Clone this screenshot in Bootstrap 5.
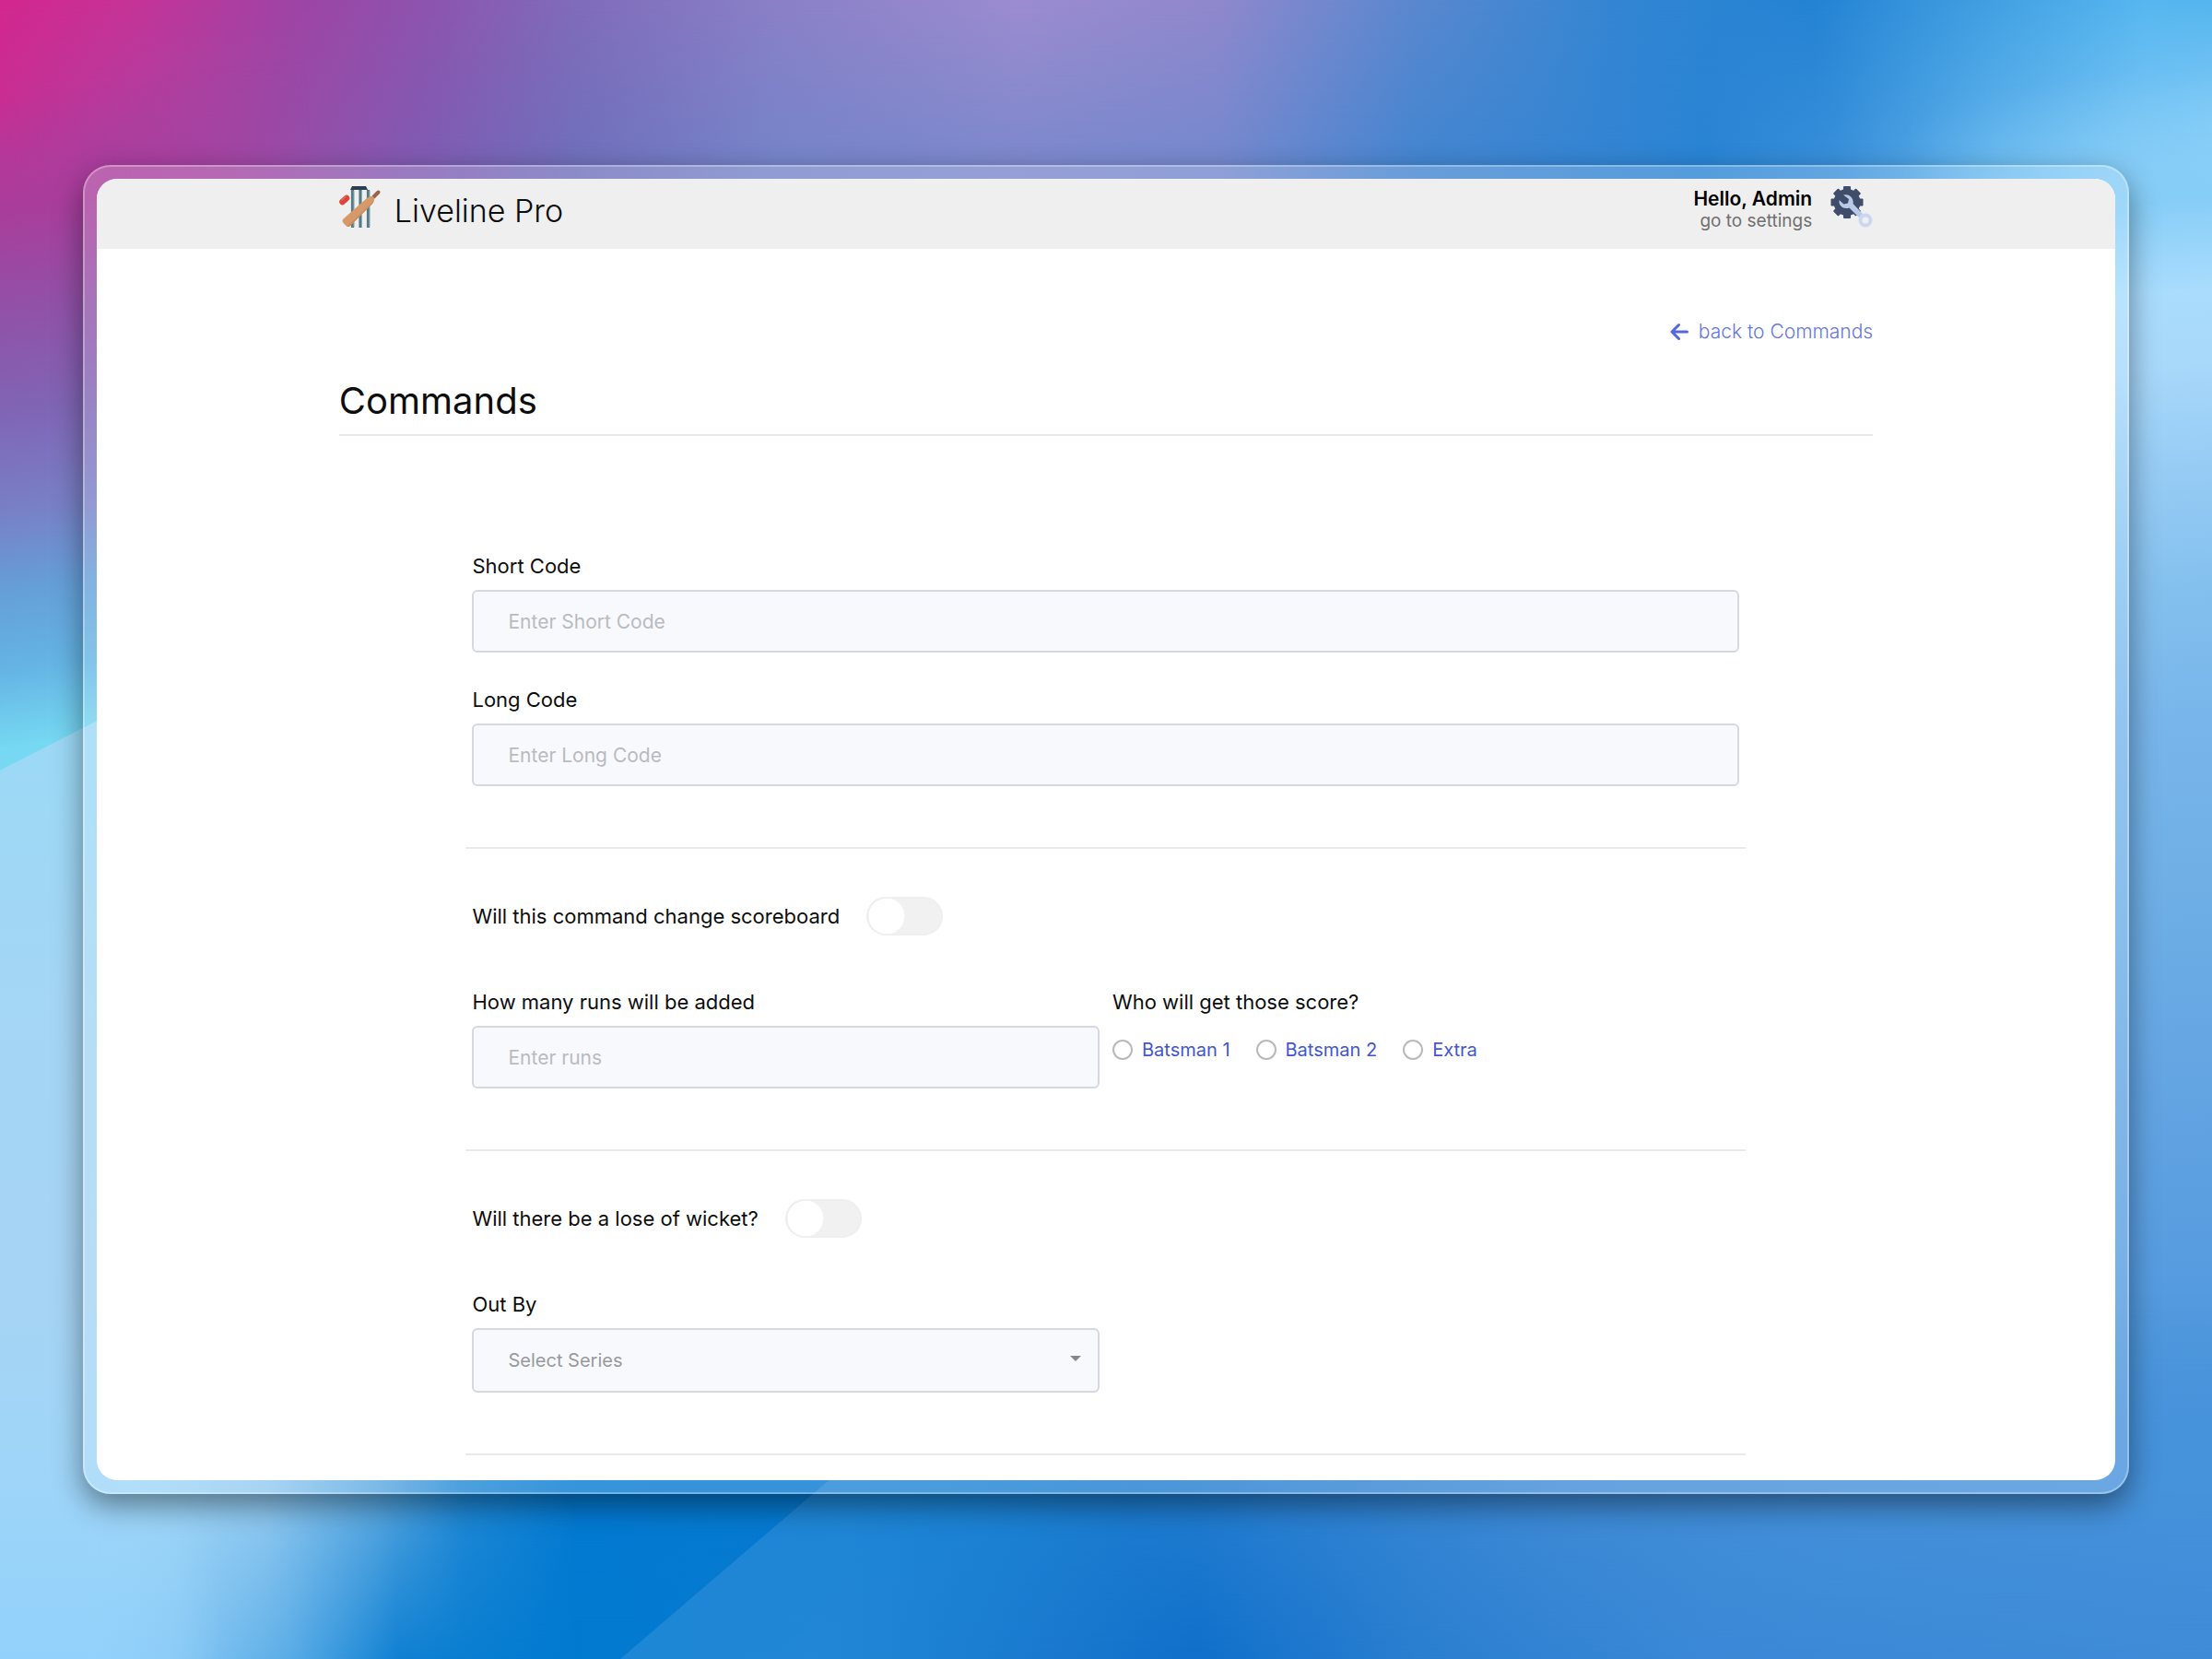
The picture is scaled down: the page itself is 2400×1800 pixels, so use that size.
<!DOCTYPE html>
<html lang="en">
<head>
<meta charset="utf-8">
<meta name="viewport" content="width=device-width, initial-scale=1">
<title>Liveline Pro – Commands</title>
<link href="https://cdn.jsdelivr.net/npm/bootstrap@5.3.0/dist/css/bootstrap.min.css" rel="stylesheet">
<style>
body { font-family: Inter, "Open Sans", sans-serif; color: #0d0d0d; font-size: 22px; line-height: 32px; background: #4a94da; }

/* Wallpaper */
.wallpaper { z-index: 0; }
.wallpaper > div { position: absolute; inset: 0; }
.wp-top { background: linear-gradient(to right, #d3278f 0, #c63397 6%, #a043a5 13%, #8e53ae 19%, #806cba 26%, #8a80c8 35%, #9c8cd0 46%, #9088cd 55%, #5a88cf 64%, #3386d3 73%, #2483d4 82%, #42a0e2 90%, #56b7f0 97%, #55b5ee); }
.wp-upper { background: linear-gradient(to right, #c23295 0, #aa42a2 6%, #964ea8 13%, #7f5bb2 19%, #6f6fbb 26%, #7584c8 35%, #7c88cc 46%, #7488cd 55%, #4385d0 64%, #2a84d4 77%, #3a90da 83%, #60b3ec 90%, #7fc7f5 96%, #8fd2fa); -webkit-mask-image: linear-gradient(transparent, #000 10%); mask-image: linear-gradient(transparent, #000 10%); }
.wp-left { background: linear-gradient(172deg, transparent 5%, #a83e9c 11%, #9052a8 16%, #8065b5 21%, #7880c6 26%, #659fd8 30%, #64b4e4 34%, #76d8f2 38%); -webkit-mask-image: linear-gradient(to right, #000 5%, transparent 14%); mask-image: linear-gradient(to right, #000 5%, transparent 14%); }
.wp-pale { background: linear-gradient(#9cd9f6 46%, #a4d6f5 60%, #a6d4f4 78%, #9fd5f8 88%, #92d1fb); clip-path: polygon(0 46.4%, 5% 43%, 10% 40%, 10% 100%, 0 100%); -webkit-mask-image: linear-gradient(to right, #000 4%, transparent 10%); mask-image: linear-gradient(to right, #000 4%, transparent 10%); }
.wp-right { background: linear-gradient(175deg, transparent 14%, #86cdf7 21%, #a9dcfd 26%, #a8d8fa 30%, #98cdf5 35%, #84c0ee 42%, #78b5ea 49%, #6fafe6 58%, #62a3e2 70%, #559bdf 80%, #4a94da 88%, #3f8ad5 95%, #3584d4); -webkit-mask-image: linear-gradient(to left, #000 4%, transparent 14%); mask-image: linear-gradient(to left, #000 4%, transparent 14%); }
.wp-lower { background: linear-gradient(to right, #9fd6f8 0, #a0d8f8 6%, #92caf1 12%, #5ca9e1 17%, #2088d5 21%, #047ad2 26%, #0579d0 37%, #0f7cd1 44%, #1a7ace 51%, #2a80d2 58%, #3e8ad6 70%, #4490da 83%, #4692db); -webkit-mask-image: linear-gradient(transparent 78%, #000 88%); mask-image: linear-gradient(transparent 78%, #000 88%); }
.wp-base { background: linear-gradient(to right, #94d2fa 0, #88c8f4 8%, #5aace6 13%, #1080d2 18%, #007acf 26%, #0a7bd0 37%, #1272ca 48%, #0f6fca 54%, #2a7ecf 64%, #3a88d6 77%, #3f8bd8); -webkit-mask-image: linear-gradient(transparent 90%, #000); mask-image: linear-gradient(transparent 90%, #000); }
.wp-ray { background: linear-gradient(to right, rgba(70,155,222,.4) 28%, rgba(60,148,220,.45) 38%, transparent 54%); clip-path: polygon(38.5% 88%, 60% 88%, 60% 100%, 28% 100%); }

/* Glass frame and the window in it */
.page-pad { padding: 179px 90px 180px; }
.glass { padding: 13px; border: 2px solid rgba(255,255,255,.3); border-radius: 30px; background: rgba(255,255,255,.2); box-shadow: 0 12px 32px rgba(0,0,0,.45); }
.app-window { border-radius: 22px; }
.inner-wrap { width: 76%; margin: 0 auto; }
.topbar { background: #efefef; padding: 8px 0 12px; min-height: 76px; }
.brand-link { gap: 14px; }
.brand-name { font-size: 34px; font-weight: 300; line-height: 54px; color: #0d0d0d; }
.admin-link { gap: 20px; }
.hello { font-size: 21px; font-weight: 600; line-height: 27px; }
.to-settings { font-size: 19px; line-height: 22px; color: #6f6f6f; }
.back-row { padding-top: 75px; }
.back-link { font-size: 21px; font-weight: 300; line-height: 30px; gap: 10px; color: #6577dd; }
.page-title { font-size: 40px; line-height: 48px; font-weight: 400; margin: 36px 0 0; padding-bottom: 12px; border-bottom: 2px solid #e8e8e8; }

/* Form */
.command-form { max-width: 1389px; margin: 0 auto; padding: 125px 0 27px; }
.field-label { display: block; margin-bottom: 10px; font-size: 22px; line-height: 32px; }
.field-box, .field-box:focus { height: 68px; padding: 0 37px; font-size: 21px; background-color: #f8f9fd; border: 2px solid #d5d8de; border-radius: 6px; color: #333; }
.field-box::placeholder { color: #b9bbc0; opacity: 1; }
select.field-box { height: 70px; font-size: 20px; color: #97999c; background-image: url("data:image/svg+xml,%3Csvg xmlns='http://www.w3.org/2000/svg' viewBox='0 0 12 6'%3E%3Cpath d='M0 0h12L6 6z' fill='%23888'/%3E%3C/svg%3E"); background-size: 12px 6px; background-position: right 18px top 28px; }
.field-gap { margin-top: 35px; }
.divider { margin: 66px 0 52px; border: 0; border-top: 2px solid #e9eaeb; opacity: 1; }
.divider:last-child { margin-bottom: 0; }
.side-pad { padding: 0 7px; }
.toggle-line { gap: 29px; margin-bottom: 56px; }
.form-switch .toggle { width: 83px; height: 42px; margin: 0; border: 2px solid #efefef; background-color: #f1f1f1; background-size: 40px 40px; background-position: left center; background-image: url("data:image/svg+xml,%3Csvg xmlns='http://www.w3.org/2000/svg' viewBox='0 0 40 40'%3E%3Ccircle cx='20' cy='20' r='19.5' fill='%23fff'/%3E%3C/svg%3E"); border-radius: 21px; }
.form-switch .toggle:checked { background-position: right center; background-color: #4a5ed0; }
.choices { gap: 28px; padding-top: 10px; }
.choice { gap: 10px; font-size: 20px; color: #4257cf; }
.choice .form-check-input { width: 22px; height: 22px; margin: 0; border: 2px solid #b9b9b9; }
</style>
<script src="https://cdn.jsdelivr.net/npm/bootstrap@5.3.0/dist/js/bootstrap.bundle.min.js"></script>
</head>
<body>
<div class="position-relative min-vh-100 overflow-hidden">
  <div class="wallpaper position-absolute top-0 start-0 w-100 h-100" aria-hidden="true">
    <div class="wp-top"></div><div class="wp-upper"></div><div class="wp-left"></div><div class="wp-right"></div>
    <div class="wp-lower"></div><div class="wp-base"></div><div class="wp-ray"></div><div class="wp-pale"></div>
  </div>

  <div class="page-pad position-relative">
    <div class="glass">
      <div class="app-window bg-white overflow-hidden">
        <header class="topbar">
          <div class="inner-wrap d-flex justify-content-between align-items-start">
            <a href="#" class="brand-link d-flex align-items-start text-decoration-none">
              <svg width="46" height="46" viewBox="0 0 46 46" aria-hidden="true">
                <path d="M14.500 4v41M23 4v41M31.500 4v41" stroke="#527a87" stroke-width="3.200" fill="none"/>
                <path d="M16 5v39M24.500 5v39M33 5v39" stroke="#8fb0b8" stroke-width="1" fill="none"/>
                <path d="M14 0h15l2 4H12z" fill="#2c3e50"/>
                <path d="M37.500 11.500 42.500 6.500" stroke="#9b6247" stroke-width="4" stroke-linecap="round"/>
                <path d="M36 11q3 1.500 2 4.500-1.500 4-4.500 6L12 43q-2.500 2-4.500 0L4.500 40q-2-2.500 0-4.500L30 13q3-2.500 6-2z" fill="#d69a6a"/>
                <path d="M38 15.500q-1.500 4-4.500 6L12 43q-2 1.500-3.500.7z" fill="#c98a5c"/>
                <path d="M3.500 17 8 13" stroke="#d9453a" stroke-width="6.500" stroke-linecap="round"/>
                <path d="M3 15 7 11" stroke="#ec6a58" stroke-width="1.500" stroke-linecap="round"/>
              </svg>
              <span class="brand-name">Liveline Pro</span>
            </a>
            <a href="#" class="admin-link d-flex align-items-start text-decoration-none text-end">
              <span class="d-flex flex-column">
                <span class="hello text-black">Hello, Admin</span>
                <span class="to-settings">go to settings</span>
              </span>
              <svg width="46" height="46" viewBox="0 0 46 46" aria-hidden="true">
                <g fill="#3f4d6b">
                  <circle cx="18" cy="17.500" r="14.500"/>
                  <rect x="14" y="0" width="8" height="35" rx="1"/>
                  <rect x="14" y="0" width="8" height="35" rx="1" transform="rotate(45 18 17.500)"/>
                  <rect x="14" y="0" width="8" height="35" rx="1" transform="rotate(90 18 17.500)"/>
                  <rect x="14" y="0" width="8" height="35" rx="1" transform="rotate(135 18 17.500)"/>
                </g>
                <path d="M14 9.500q7-1.500 10 4.500 1 2.500.5 5L35 30l-4 4-10.500-10.500Q14 25.500 10.500 20.500 9 18 9.500 15l5 4.500 4.500-1 1-4.500z" fill="#b9c9ea"/>
                <circle cx="38" cy="37" r="5.500" fill="none" stroke="#cbd7f2" stroke-width="4"/>
              </svg>
            </a>
          </div>
        </header>

        <main class="inner-wrap">
          <div class="back-row d-flex justify-content-end">
            <a href="#" class="back-link d-inline-flex align-items-center text-decoration-none">
              <svg width="22" height="20" viewBox="0 0 22 20" fill="none" stroke="#5468dc" stroke-width="3" stroke-linecap="round" stroke-linejoin="round" aria-hidden="true"><path d="M19.500 10H3M10.500 2.500 3 10l7.500 7.500"/></svg>
              <span>back to Commands</span>
            </a>
          </div>
          <h1 class="page-title">Commands</h1>

          <form class="command-form">
            <div class="side-pad">
              <label class="field-label" for="shortCode">Short Code</label>
              <input class="form-control field-box" id="shortCode" type="text" placeholder="Enter Short Code">
            </div>
            <div class="side-pad field-gap">
              <label class="field-label" for="longCode">Long Code</label>
              <input class="form-control field-box" id="longCode" type="text" placeholder="Enter Long Code">
            </div>

            <hr class="divider">

            <div class="side-pad toggle-line form-switch d-flex align-items-center">
              <label for="changeScore">Will this command change scoreboard</label>
              <input class="form-check-input toggle" id="changeScore" type="checkbox" role="switch">
            </div>
            <div class="row g-0">
              <div class="col-6 side-pad">
                <label class="field-label" for="runs">How many runs will be added</label>
                <input class="form-control field-box" id="runs" type="text" placeholder="Enter runs">
              </div>
              <fieldset class="col-6 side-pad">
                <legend class="field-label">Who will get those score?</legend>
                <div class="choices d-flex">
                  <label class="choice d-flex align-items-center"><input class="form-check-input" type="radio" name="scorer">Batsman 1</label>
                  <label class="choice d-flex align-items-center"><input class="form-check-input" type="radio" name="scorer">Batsman 2</label>
                  <label class="choice d-flex align-items-center"><input class="form-check-input" type="radio" name="scorer">Extra</label>
                </div>
              </fieldset>
            </div>

            <hr class="divider">

            <div class="side-pad toggle-line form-switch d-flex align-items-center">
              <label for="loseWicket">Will there be a lose of wicket?</label>
              <input class="form-check-input toggle" id="loseWicket" type="checkbox" role="switch">
            </div>
            <div class="row g-0">
              <div class="col-6 side-pad">
                <label class="field-label" for="outBy">Out By</label>
                <select class="form-select field-box" id="outBy"><option>Select Series</option></select>
              </div>
            </div>

            <hr class="divider">
          </form>
        </main>
      </div>
    </div>
  </div>
</div>
</body>
</html>
